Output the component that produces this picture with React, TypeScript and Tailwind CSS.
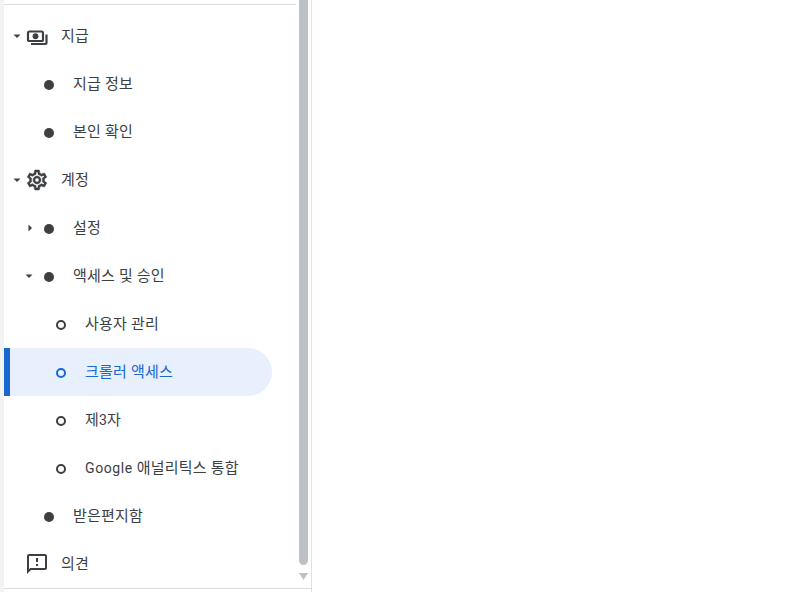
import React from "react";

const SETTINGS = "M19.43 12.98c.04-.32.07-.64.07-.98 0-.34-.03-.66-.07-.98l2.11-1.65c.19-.15.24-.42.12-.64l-2-3.46c-.09-.16-.26-.25-.44-.25-.06 0-.12.01-.17.03l-2.49 1c-.52-.4-1.08-.73-1.69-.98l-.38-2.65C14.46 2.18 14.25 2 14 2h-4c-.25 0-.46.18-.49.42l-.38 2.65c-.61.25-1.17.59-1.69.98l-2.49-1c-.06-.02-.12-.03-.18-.03-.17 0-.34.09-.43.25l-2 3.46c-.13.22-.07.49.12.64l2.11 1.65c-.04.32-.07.65-.07.98 0 .33.03.66.07.98l-2.11 1.65c-.19.15-.24.42-.12.64l2 3.46c.09.16.26.25.44.25.06 0 .12-.01.17-.03l2.49-1c.52.4 1.08.73 1.69.98l.38 2.65c.03.24.24.42.49.42h4c.25 0 .46-.18.49-.42l.38-2.65c.61-.25 1.17-.59 1.69-.98l2.49 1c.06.02.12.03.18.03.17 0 .34-.09.43-.25l2-3.46c.12-.22.07-.49-.12-.64l-2.11-1.65zm-1.98-1.71c.04.31.05.52.05.73 0 .21-.02.43-.05.73l-.14 1.13.89.7 1.08.84-.7 1.21-1.27-.51-1.04-.42-.9.68c-.43.32-.84.56-1.25.73l-1.06.43-.16 1.13-.2 1.35h-1.4l-.19-1.35-.16-1.13-1.06-.43c-.43-.18-.83-.41-1.23-.71l-.91-.7-1.06.43-1.27.51-.7-1.21 1.08-.84.89-.7-.14-1.13c-.03-.31-.05-.54-.05-.74s.02-.43.05-.73l.14-1.13-.89-.7-1.08-.84.7-1.21 1.27.51 1.04.42.9-.68c.43-.32.84-.56 1.25-.73l1.06-.43.16-1.13.2-1.35h1.39l.19 1.35.16 1.13 1.06.43c.43.18.83.41 1.23.71l.91.7 1.06-.43 1.27-.51.7 1.21-1.07.85-.89.7.14 1.13zM12 8c-2.21 0-4 1.79-4 4s1.79 4 4 4 4-1.79 4-4-1.79-4-4-4zm0 6c-1.1 0-2-.9-2-2s.9-2 2-2 2 .9 2 2-.9 2-2 2z";
const FEEDBACK = "M20 2H4c-1.1 0-1.99.9-1.99 2L2 22l4-4h14c1.1 0 2-.9 2-2V4c0-1.1-.9-2-2-2zm0 14H5.17L4 17.17V4h16v12zm-9-4h2v2h-2zm0-6h2v4h-2z";

function PaymentsIcon() {
  return (
    <svg viewBox="0 0 24 24" className="h-6 w-6 shrink-0">
      <rect x="3" y="7.5" width="15" height="9.5" rx="1.5" fill="none" stroke="#3c4043" strokeWidth="2.2" />
      <circle cx="10.5" cy="12.25" r="2.9" fill="#3c4043" />
      <path d="M21.5 10.5v8.5a1 1 0 0 1-1 1H6" fill="none" stroke="#3c4043" strokeWidth="2.2" />
    </svg>
  );
}

function Icon({ d, bold }: { d: string; bold?: boolean }) {
  return (
    <svg viewBox="0 0 24 24" className={`h-6 w-6 shrink-0 fill-[#3c4043] ${bold ? "stroke-[#3c4043] stroke-[0.45]" : ""}`}>
      <path d={d} />
    </svg>
  );
}

function Caret({ dir }: { dir: "down" | "right" }) {
  return (
    <svg viewBox="0 0 8 8" className="h-2 w-2 fill-[#3c4043]">
      {dir === "down" ? <path d="M0.5 2.5h7L4 6z" /> : <path d="M2.5 0.5v7L6 4z" />}
    </svg>
  );
}

function Row({ pad, caret, caretGap, children, label, gap, active }: {
  pad: string; caret?: "down" | "right"; caretGap?: string; children: React.ReactNode; label: React.ReactNode; gap: string; active?: boolean;
}) {
  return (
    <div className={`flex h-12 items-center ${pad} ${active ? "w-[268px] rounded-r-[24px] border-l-[6px] border-[#1967d2] bg-[#e8f0fe] text-[#1967d2]" : "text-[#3c4043]"}`}>
      <div className={`flex shrink-0 items-center justify-center ${caretGap ?? ""}`}>
        {caret ? <Caret dir={caret} /> : null}
      </div>
      {children}
      <span className={`${gap} whitespace-nowrap text-[15px] tracking-[0.2px]`}>{label}</span>
    </div>
  );
}

const Dot = () => <span className="mt-[2px] h-2.5 w-2.5 shrink-0 rounded-full bg-[#3c4043]" />;
const Ring = ({ active }: { active?: boolean }) => (
  <span className={`mt-[2px] h-2.5 w-2.5 shrink-0 rounded-full border-2 ${active ? "border-[#1967d2]" : "border-[#3c4043]"}`} />
);

export default function App() {
  return (
    <div className="flex h-[592px] w-[808px] overflow-hidden bg-white text-[14px] leading-5 [font-family:Roboto,'Noto_Sans_CJK_KR','Noto_Sans',sans-serif]">
      <div className="w-1 shrink-0 bg-[#f1f3f4]" />
      <div className="flex h-full w-[308px] shrink-0 border-r border-[#e0e2e5]">
        <div className="flex w-[292px] shrink-0 flex-col pt-[4px]">
          <div className="h-px bg-[#dadce0]" />
          <div className="mt-[7px] flex flex-1 flex-col">
            <Row pad="pl-[9px]" caret="down" caretGap="w-2 mr-[4px]" label="지급" gap="ml-[12px]"><PaymentsIcon /></Row>
            <Row pad="pl-[40px]" label="지급 정보" gap="ml-[19px]"><Dot /></Row>
            <Row pad="pl-[40px]" label="본인 확인" gap="ml-[19px]"><Dot /></Row>
            <Row pad="pl-[9px]" caret="down" caretGap="w-2 mr-[4px]" label="계정" gap="ml-[12px]"><Icon d={SETTINGS} bold /></Row>
            <Row pad="pl-[22px]" caret="right" caretGap="w-2 mr-[10px]" label="설정" gap="ml-[19px]"><Dot /></Row>
            <Row pad="pl-[21px]" caret="down" caretGap="w-2 mr-[11px]" label="액세스 및 승인" gap="ml-[19px]"><Dot /></Row>
            <Row pad="pl-[52px]" label="사용자 관리" gap="ml-[19px]"><Ring /></Row>
            <Row pad="pl-[46px]" active label="크롤러 액세스" gap="ml-[19px]"><Ring active /></Row>
            <Row pad="pl-[52px]" label={<>제<span className="text-[14px] tracking-normal">3</span>자</>} gap="ml-[19px]"><Ring /></Row>
            <Row pad="pl-[52px]" label={<><span className="text-[14px] tracking-[0.6px]">Google</span> 애널리틱스 통합</>} gap="ml-[19px]"><Ring /></Row>
            <Row pad="pl-[40px]" label="받은편지함" gap="ml-[19px]"><Dot /></Row>
            <Row pad="pl-[21px]" label="의견" gap="ml-[12px]"><Icon d={FEEDBACK} /></Row>
          </div>
          <div className="mb-[3px] h-px w-[308px] shrink-0 bg-[#dadce0]" />
        </div>
        <div className="ml-[3px] flex w-[9px] shrink-0 flex-col items-center">
          <div className="h-[565px] w-[9px] rounded-b-[5px] bg-[#bdc1c6]" />
          <svg viewBox="0 0 9 7" className="mt-[8px] h-[7px] w-[9px] fill-[#bdc1c6]"><path d="M0 0h9L4.5 7z" /></svg>
        </div>
      </div>
    </div>
  );
}
